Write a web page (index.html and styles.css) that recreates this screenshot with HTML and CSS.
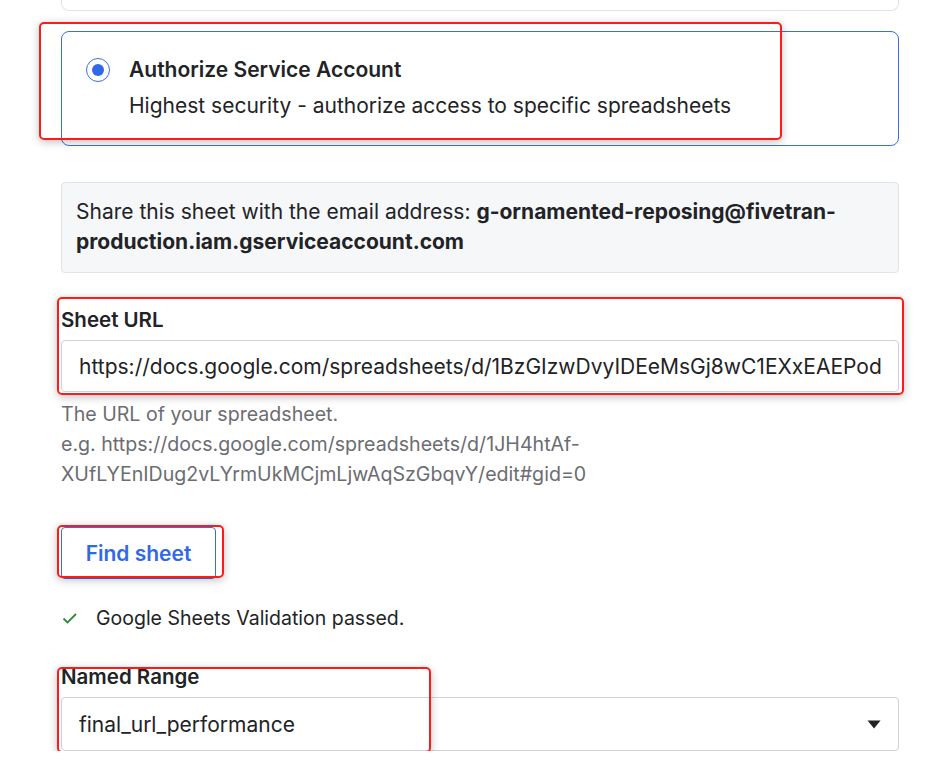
FILE: index.html
```html
<!DOCTYPE html>
<html>
  <head>
    <meta charset="UTF-8" />
    <title>Google Sheets setup</title>
    <link rel="stylesheet" href="styles.css">
  </head>
  <body>
    <div class="page">
      <div class="card card-prev"></div>

      <div class="card card-active">
        <span class="radio"><span class="radio-dot"></span></span>
        <div class="option-text">
          <div class="option-title">Authorize Service Account</div>
          <div class="option-desc">Highest security - authorize access to specific spreadsheets</div>
        </div>
        <span class="mark mark-option"></span>
      </div>

      <div class="info">
        Share this sheet with the email address: <b>g-ornamented-reposing@fivetran-production.iam.gserviceaccount.com</b>
      </div>

      <div class="field field-url">
        <label class="field-label" for="sheetUrl">Sheet URL</label>
        <input class="text-input" type="text" id="sheetUrl" value="https://docs.google.com/spreadsheets/d/1BzGIzwDvyIDEeMsGj8wC1EXxEAEPod" />
        <span class="mark mark-url"></span>
      </div>
      <div class="help">
        The URL of your spreadsheet.<br />
        e.g. https://docs.google.com/spreadsheets/d/1JH4htAf-<br />
        XUfLYEnIDug2vLYrmUkMCjmLjwAqSzGbqvY/edit#gid=0
      </div>

      <div class="btn-row">
        <button class="btn-outline" type="button">Find sheet</button>
        <span class="mark mark-btn"></span>
      </div>

      <div class="status">
        <svg class="check" width="16" height="16" viewBox="0 0 16 16">
          <path d="M1.5 8.5 L5.5 12.5 L14 4" fill="none" stroke="#2e8b3a" stroke-width="1.8" />
        </svg>
        <span>Google Sheets Validation passed.</span>
      </div>

      <div class="field field-range">
        <label class="field-label" for="namedRange">Named Range</label>
        <div class="select">
          <span>final_url_performance</span>
          <svg width="14" height="9" viewBox="0 0 14 9">
            <path d="M0.5 0.5 H13.5 L7 8.5 Z" fill="#222" />
          </svg>
        </div>
        <span class="mark mark-range"></span>
      </div>
    </div>
  </body>
</html>
```

FILE: styles.css
```css
body {
  margin: 0;
  background: #ffffff;
  font-family: Inter, "Noto Sans", sans-serif;
  color: #222326;
  font-size: 21px;
}

.page {
  padding: 0 39px 0 61px;
  position: relative;
}

.card {
  border: 1px solid #e1e3e7;
  border-radius: 8px;
  background: #fff;
}

.card-prev {
  height: 20px;
  margin-top: -10px;
  border-top: none;
  border-top-left-radius: 0;
  border-top-right-radius: 0;
}

.card-active {
  margin-top: 20px;
  border-color: #3b6fe0;
  display: flex;
  align-items: flex-start;
  padding: 24px 24px 25px 24px;
  position: relative;
}

.radio {
  width: 24px;
  height: 24px;
  box-sizing: border-box;
  border: 1.5px solid #3b6fe0;
  border-radius: 50%;
  display: flex;
  align-items: center;
  justify-content: center;
  margin-top: 2px;
  flex-shrink: 0;
}

.radio-dot {
  width: 12px;
  height: 12px;
  border-radius: 50%;
  background: #3069e8;
}

.option-text {
  margin-left: 19px;
}

.option-title {
  font-weight: 600;
  line-height: 28px;
}

.option-desc {
  margin-top: 8px;
  line-height: 28px;
}

.info {
  margin-top: 36px;
  background: #f6f7f9;
  border: 1px solid #e1e3e7;
  border-radius: 4px;
  padding: 14px 14px 15px 14px;
  line-height: 30px;
}

.info b {
  font-weight: 700;
}

.field {
  position: relative;
}

.field-url {
  margin-top: 34px;
}

.field-label {
  display: block;
  font-weight: 600;
  line-height: 26px;
  font-size: 20.5px;
}

.text-input {
  display: block;
  width: 100%;
  box-sizing: border-box;
  margin-top: 7px;
  height: 52px;
  border: 1px solid #cfd2da;
  border-radius: 4px;
  padding: 0 17px;
  font-family: inherit;
  font-size: 21px;
  color: #222326;
  background: #fff;
}

.help {
  margin-top: 7px;
  color: #6b6d72;
  line-height: 30px;
  font-size: 19.6px;
}

.btn-row {
  margin-top: 38px;
  position: relative;
  height: 52px;
}

.btn-outline {
  height: 52px;
  width: 155px;
  border: 1px solid #3b6fe0;
  border-radius: 4px;
  background: #fff;
  color: #3069e8;
  font-family: inherit;
  font-weight: 600;
  font-size: 21px;
  padding: 0;
}

.status {
  margin-top: 24px;
  display: flex;
  align-items: center;
  height: 30px;
}

.check {
  margin-left: 1px;
  margin-right: 18px;
}

.status span {
  font-size: 19.5px;
}

.field-range {
  margin-top: 31px;
}

.select {
  margin-top: 7px;
  height: 54px;
  box-sizing: border-box;
  border: 1px solid #cfd2da;
  border-radius: 4px;
  display: flex;
  align-items: center;
  justify-content: space-between;
  padding: 0 17px 0 17px;
}

/* red annotation boxes drawn over the screenshot */
.mark {
  position: absolute;
  box-sizing: border-box;
  border: 2px solid #ff1a1a;
  border-radius: 5px;
  box-shadow: 0 2px 8px rgba(0, 0, 0, 0.25);
  pointer-events: none;
}

.mark-option {
  left: -23px;
  top: -10px;
  width: 743px;
  height: 118px;
}

.mark-url {
  left: -4px;
  top: -10px;
  width: 847px;
  height: 98px;
}

.mark-btn {
  left: -4px;
  top: -2px;
  width: 167px;
  height: 53px;
}

.mark-range {
  left: -4px;
  top: 3px;
  width: 374px;
  height: 86px;
}
```
